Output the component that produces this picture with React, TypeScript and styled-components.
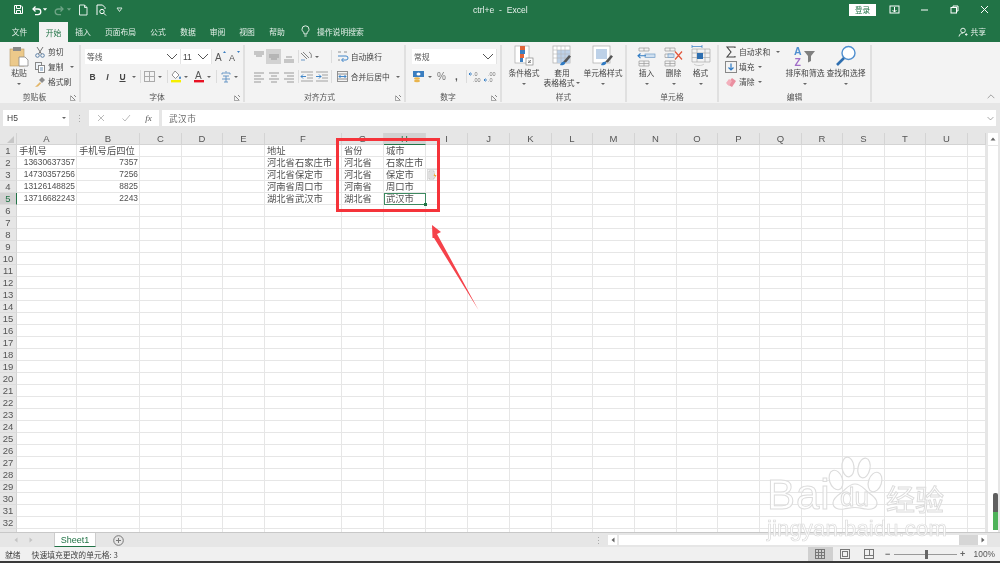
import React from 'react';
import styled, { createGlobalStyle } from 'styled-components';

const CJK = `"Noto Sans CJK SC", "Liberation Sans", sans-serif`;
const LATIN = `"Liberation Sans", sans-serif`;
const Global = createGlobalStyle`
  html, body { margin: 0; padding: 0; background: #fff; }
  * { box-sizing: border-box; }
`;

const Page = styled.div`
  position: relative; width: 1000px; height: 563px; overflow: hidden;
  font-family: ${CJK}; color: #444; background: #e6e6e6;
  filter: blur(0.35px);
`;

/* title bar */
const TitleBar = styled.div`
  display: flex; align-items: center; height: 21px; background: #217346; color: #fff;
  padding: 0 0 2px 11px;
`;
const Qat = styled.div`display: flex; align-items: center; width: 300px; flex: none;`;
const QatSlot = styled.span<{ $w: number; $ml?: number }>`
  display: flex; align-items: center; justify-content: center; width: ${p => p.$w}px; margin-left: ${p => p.$ml ?? 0}px; flex: none;
`;
const TitleText = styled.div`
  width: 410px; padding-left: 162px; font: 8.6px ${LATIN}; color: #e8f1ec; white-space: pre; flex: none;
`;
const Login = styled.div`
  margin-left: 128px; width: 27px; height: 12px; background: #fff; color: #217346; font-size: 7.6px;
  display: flex; align-items: center; justify-content: center; flex: none;
`;
const WinBtn = styled.span<{ $ml: number }>`display: flex; margin-left: ${p => p.$ml}px; flex: none;`;

/* tabs */
const TabBar = styled.div`display: flex; height: 21px; background: #217346; align-items: flex-end;`;
const Tab = styled.div<{ $w: number; $active?: boolean }>`
  width: ${p => p.$w}px; height: ${p => (p.$active ? 20 : 21)}px; flex: none; display: flex; align-items: center; justify-content: center;
  padding-bottom: ${p => (p.$active ? 0 : 1)}px;
  font-size: 7.8px; color: ${p => (p.$active ? '#217346' : '#e3efe8')}; background: ${p => (p.$active ? '#f3f3f3' : 'transparent')};
`;
const TellMe = styled.div`display: flex; align-items: center; gap: 7px; padding: 0 0 1px 9px; font-size: 7.8px; color: #e3efe8; height: 21px;`;
const Share = styled.div`
  margin-left: auto; margin-right: 14px; display: flex; align-items: center; gap: 2px; height: 21px; font-size: 7.8px; color: #e3efe8;
`;

/* ribbon */
const Ribbon = styled.div`display: flex; height: 61px; background: #f3f3f3; padding: 3px 0 1px; position: relative;`;
const Group = styled.div<{ $w: number }>`
  position: relative; width: ${p => p.$w}px; flex: none; display: flex; flex-direction: column; border-right: 2px solid #e0e0e0;
`;
const GroupBody = styled.div<{ $pl?: number; $pt?: number; $col?: boolean }>`
  flex: 1; display: flex; flex-direction: ${p => (p.$col ? 'column' : 'row')}; padding-left: ${p => p.$pl ?? 0}px; padding-top: ${p => p.$pt ?? 0}px; min-height: 0;
`;
const GroupLabel = styled.div<{ $launch?: boolean }>`
  height: 11px; line-height: 11px; font-size: 7.8px; text-align: center; color: #555; flex: none; padding-right: ${p => (p.$launch ? 10 : 0)}px;
`;
const Launcher = styled.span`
  position: absolute; right: 3px; bottom: 1px; width: 6px; height: 6px; border: 1px solid #aaa; border-top-color: transparent; border-right-color: transparent;
  background: linear-gradient(45deg, transparent 45%, #888 50%, transparent 60%);
`;
const Stack = styled.div<{ $w?: number; $ml?: number }>`
  display: flex; flex-direction: column; width: ${p => (p.$w ? `${p.$w}px` : 'auto')}; margin-left: ${p => p.$ml ?? 0}px; margin-top: -1px; flex: none;
`;
const SmallBtn = styled.div`display: flex; align-items: center; height: 15px; font-size: 7.8px; color: #444; gap: 2px; white-space: nowrap;`;
const IconBox = styled.span<{ $w?: number; $bg?: string; $ml?: number }>`
  display: flex; align-items: center; justify-content: center; width: ${p => p.$w ?? 15}px; height: 15px; flex: none;
  background: ${p => p.$bg ?? 'transparent'}; margin-left: ${p => p.$ml ?? 0}px;
`;
const Row = styled.div<{ $mt?: number }>`display: flex; align-items: center; height: 15px; margin-top: ${p => p.$mt ?? 0}px;`;
const Sep = styled.span<{ $l: number; $r: number }>`
  width: 1px; height: 13px; background: #dcdcdc; margin: 0 ${p => p.$r}px 0 ${p => p.$l}px; flex: none;
`;
const CaretMark = styled.span<{ $w?: number; $ml?: number }>`
  display: flex; align-items: center; justify-content: center; width: ${p => p.$w ?? 8}px; flex: none; margin-left: ${p => p.$ml ?? 0}px;
  &::after { content: ''; border-left: 2px solid transparent; border-right: 2px solid transparent; border-top: 2px solid #666; }
`;
const Combo = styled.div<{ $w: number }>`
  width: ${p => p.$w}px; height: 15px; background: #fff; display: flex; align-items: center; justify-content: space-between;
  padding: 0 2px 0 2px; font-size: 7.8px; color: #555; flex: none; border-right: 1px solid #e4e4e4;
`;
const BigBtn = styled.div<{ $w: number }>`
  width: ${p => p.$w}px; flex: none; display: flex; flex-direction: column; align-items: center; font-size: 7.8px; line-height: 10px; color: #444; white-space: nowrap;
`;
const BigIcon = styled.div`height: 22px; display: flex; align-items: flex-end; justify-content: center; margin-bottom: 1px; flex: none;`;
const BigCaret = styled(CaretMark)`height: 10px; margin-top: 1px;`;
const Inline = styled.span`display: flex; align-items: center; gap: 1px;`;
const Glyph = styled.span<{ $b?: boolean; $i?: boolean; $u?: boolean; $size?: number; $c?: string }>`
  font-family: ${LATIN}; font-size: ${p => p.$size ?? 8.5}px; font-weight: ${p => (p.$b ? 700 : 400)}; font-style: ${p => (p.$i ? 'italic' : 'normal')};
  text-decoration: ${p => (p.$u ? 'underline' : 'none')}; color: ${p => p.$c ?? '#444'};
`;
const Collapse = styled.span`position: absolute; right: 5px; bottom: 3px; display: flex; transform: rotate(180deg);`;

/* formula bar */
const FormulaBar = styled.div`display: flex; align-items: center; height: 30px; padding: 0 4px 0 3px; background: #e6e6e6; flex: none;`;
const NameBox = styled.div`
  width: 66px; height: 16px; background: #fff; display: flex; align-items: center; justify-content: space-between; padding: 0 2px 0 4px; font: 8.5px ${LATIN}; color: #444; flex: none;
`;
const Dots = styled.span`width: 20px; flex: none; display: flex; justify-content: center;`;
const FxBox = styled.div`
  width: 70px; height: 16px; background: #fff; display: flex; align-items: center; justify-content: space-around; flex: none; margin-right: 3px;
`;
const Fx = styled.span`font: italic 9px "Liberation Serif", serif; color: #555;`;
const FormulaInput = styled.div`
  flex: 1; height: 16px; background: #fff; display: flex; align-items: center; justify-content: space-between; padding: 0 2px 0 7px; font-size: 8.6px; letter-spacing: .5px; color: #666;
`;

/* sheet */
const SheetArea = styled.div`position: relative; height: 399px; display: flex; background: #e6e6e6;`;
const GridWrap = styled.div`width: 986px; flex: none; overflow: hidden; background: #fff;`;
const GridRow = styled.div`display: flex; height: 12px;`;
const Corner = styled.div`
  width: 17px; flex: none; background: #e6e6e6; border-right: 1px solid #d4d4d4; border-bottom: 1px solid #d4d4d4; position: relative;
  &::after { content: ''; position: absolute; right: 2px; bottom: 1px; border-style: solid; border-width: 0 0 7px 7px; border-color: transparent transparent #c6c6c6 transparent; }
`;
const ColHead = styled.div<{ $w: number; $sel?: boolean }>`
  width: ${p => p.$w}px; flex: none; background: ${p => (p.$sel ? '#d2d2d2' : '#e6e6e6')}; border-right: 1px solid #d4d4d4;
  border-bottom: 1px solid ${p => (p.$sel ? '#217346' : '#d4d4d4')}; font: 9.500px ${LATIN}; color: ${p => (p.$sel ? '#217346' : '#555')};
  display: flex; align-items: center; justify-content: center;
`;
const RowHead = styled.div<{ $sel?: boolean }>`
  width: 17px; flex: none; background: ${p => (p.$sel ? '#d2d2d2' : '#e6e6e6')}; border-right: 1px solid ${p => (p.$sel ? '#217346' : '#d4d4d4')};
  border-bottom: 1px solid #dcdcdc; font: 9.500px ${LATIN}; color: ${p => (p.$sel ? '#217346' : '#555')};
  display: flex; align-items: center; justify-content: center;
`;
const Cell = styled.div<{ $w: number; $num?: boolean; $active?: boolean }>`
  position: relative; width: ${p => p.$w}px; flex: none; border-right: 1px solid #e6e6e6; border-bottom: 1px solid #e6e6e6;
  display: flex; align-items: center; justify-content: ${p => (p.$num ? 'flex-end' : 'flex-start')}; padding: 0 ${p => (p.$num ? 1 : 2)}px 0 2px;
  font-size: ${p => (p.$num ? 8.4 : 9.3)}px; color: #505050; white-space: nowrap; line-height: 11px;
  ${p => p.$num && `font-family: ${LATIN};`}
  ${p => p.$active && `outline: 1.5px solid #3d8a60; outline-offset: -1px; z-index: 2;`}
`;
const FillHandle = styled.span`position: absolute; right: -2px; bottom: -2px; width: 3px; height: 3px; background: #217346;`;
const FlashIcon = styled.span`
  position: absolute; left: 43px; top: 0; width: 11px; height: 12px; background: #f8f8f8; border: 1px solid #dcdcdc; display: flex; align-items: center; justify-content: center; z-index: 3;
`;

/* vertical scrollbar */
const VScroll = styled.div`width: 14px; flex: none; background: #e6e6e6; display: flex; flex-direction: column; padding: 0 2px;`;
const VArrow = styled.span`width: 10px; height: 12px; background: #fff; display: flex; align-items: center; justify-content: center; flex: none;`;
const VTrack = styled.div`flex: 1; width: 10px; background: #fff; margin-top: 1px; display: flex; flex-direction: column; justify-content: flex-end; align-items: flex-end;`;
const VMark = styled.div`width: 5px; height: 37px; margin-bottom: 2px; border-radius: 2px 2px 0 0; background: linear-gradient(#5f5f5f 0 52%, #4fb35a 52% 100%);`;

/* sheet tabs */
const SheetBar = styled.div`display: flex; align-items: center; height: 15px; background: #e6e6e6; border-top: 1px solid #c8c8c8;`;
const NavArrow = styled.span<{ $ml: number }>`width: 8px; flex: none; display: flex; align-items: center; justify-content: center; margin-left: ${p => p.$ml}px;`;
const SheetTab = styled.div`
  width: 42px; height: 14px; margin-left: 19px; background: #fff; color: #217346; font: 9px ${LATIN}; display: flex; align-items: center; justify-content: center;
  border-left: 1px solid #ccc; border-right: 1px solid #ccc; border-bottom: 1.5px solid #217346; flex: none;
`;
const AddSheet = styled.span`margin-left: 17px; flex: none; display: flex;`;
const HScrollArea = styled.div`margin-left: auto; display: flex; align-items: center; height: 14px; padding-right: 13px;`;
const HDots = styled.span`display: flex; margin-right: 8px;`;
const HBox = styled.span`width: 9px; height: 10px; background: #fff; flex: none; display: flex; align-items: center; justify-content: center;`;
const HTrack = styled.div`width: 340px; height: 10px; background: #fff; flex: none; margin-left: 2px;`;
const HRest = styled.div`width: 19px; height: 10px; background: #d6d6d6; flex: none;`;

/* status */
const StatusBar = styled.div`display: flex; align-items: center; height: 14px; background: #f0f0f0; font-size: 7.8px; color: #444; padding: 0 5px;`;
const StatusMsg = styled.span`margin-left: 11px;`;
const ViewGroup = styled.div`margin-left: auto; display: flex; align-items: center; flex: none;`;
const ViewBtn = styled.span<{ $on?: boolean }>`
  width: 24.500px; height: 14px; flex: none; display: flex; align-items: center; justify-content: center; background: ${p => (p.$on ? '#d0d0d0' : 'transparent')};
`;
const ZoomCtl = styled.div`display: flex; align-items: center; font: 8.4px ${LATIN}; color: #555; flex: none;`;
const ZoomSign = styled.span`width: 12px; flex: none; text-align: center; font: bold 9px ${LATIN}; color: #666;`;
const Slider = styled.div`position: relative; width: 63px; height: 1px; background: #999;`;
const SliderThumb = styled.span`position: absolute; left: 31px; top: -4px; width: 3px; height: 9px; background: #666;`;
const ZoomValue = styled.span`margin-left: 5px;`;
const BottomEdge = styled.div`height: 2px; background: #3a3a3a;`;

/* overlays */
const Annotation = styled.svg`position: absolute; left: 0; top: 0; width: 1000px; height: 563px; pointer-events: none; z-index: 5;`;
const Watermark = styled.div`position: absolute; left: 764px; top: 455px; width: 190px; height: 90px; pointer-events: none; z-index: 6;`;
const WmBai = styled.span`position: absolute; left: 3px; top: 19px; font: 42px/42px ${LATIN}; color: rgba(255,255,255,.7); -webkit-text-stroke: 1px #dcdcdc; letter-spacing: 1px;`;
const WmDu = styled.span`position: absolute; left: 76px; top: 29px; font: 26px/26px ${LATIN}; color: rgba(255,255,255,.5); -webkit-text-stroke: .8px #d8d8d8;`;
const WmJy = styled.span`position: absolute; left: 122px; top: 27px; font: 29px/32px ${CJK}; color: rgba(255,255,255,.7); -webkit-text-stroke: 1px #dcdcdc; white-space: nowrap;`;
const WmUrl = styled.span`position: absolute; left: 3px; top: 61px; font: 22px/26px ${LATIN}; color: rgba(255,255,255,.75); -webkit-text-stroke: .7px #dadada; white-space: nowrap; letter-spacing: .15px;`;
const WmPaw = styled.svg`position: absolute; left: 58px; top: 0; width: 68px; height: 58px;`;

const Ico = ({ s = 12, h, c, children }: { s?: number; h?: number; c?: string; children: React.ReactNode }) => (
  <svg width={s} height={h ?? s} viewBox={`0 0 ${s} ${h ?? s}`} fill="none" stroke={c ?? '#666'} strokeWidth="1">{children}</svg>
);
const Chevron = ({ c = '#555', w = 12 }: { c?: string; w?: number }) => (
  <svg width={w} height="7" viewBox="0 0 12 7" fill="none" stroke={c} strokeWidth="1"><path d="M1 1l5 5 5-5" /></svg>
);
const SmallCaretDown = ({ c = '#666' }: { c?: string }) => (
  <svg width="7" height="5" viewBox="0 0 7 5" fill={c}><path d="M1 1h5L3.500 4z" /></svg>
);
const Lines = ({ kind }: { kind: string }) => {
  const rows: Record<string, string> = {
    top: 'M2 2h10M2 4h10M4 6h6', mid: 'M2 5h10M2 7h10M4 9h6', bot: 'M4 7h6M2 10h10M2 12h10',
    l: 'M2 3h10M2 6h7M2 9h10M2 12h7', c: 'M2 3h10M4 6h6M2 9h10M4 12h6', r: 'M2 3h10M5 6h7M2 9h10M5 12h7',
  };
  return <Ico s={14} c="#999"><path d={rows[kind]} /></Ico>;
};

const IconPaste = () => (
  <svg width="20" height="21" viewBox="0 0 20 21">
    <rect x="1" y="3" width="14" height="17" fill="#ecc98a" stroke="#b79a66" strokeWidth=".6" />
    <rect x="4" y="1" width="8" height="4" fill="#8a8a8a" />
    <path d="M10 11h6l3 3v6h-9z" fill="#fff" stroke="#888" strokeWidth=".8" />
  </svg>
);
const IconCut = () => (
  <Ico s={12} c="#5b7fa6"><circle cx="3.500" cy="9.500" r="1.800" /><circle cx="8.500" cy="9.500" r="1.800" /><path d="M4.500 8L9 1M7.500 8L3 1" stroke="#777" /></Ico>
);
const IconCopy = () => (
  <Ico s={12} c="#888"><rect x="1.500" y="1.500" width="6" height="7" fill="#eef3f8" /><rect x="4.500" y="4.500" width="6" height="7" fill="#fff" /><path d="M6 7h3M6 9h3" stroke="#6a8fb5" /></Ico>
);
const IconBrush = () => (
  <svg width="12" height="12" viewBox="0 0 12 12"><path d="M5 4l3-3 3 3-3 3z" fill="#8c8c8c" /><path d="M6 6L2 10l-1 1 3-.5 3-3z" fill="#e3b667" /></svg>
);
const IconGrowFont = ({ up }: { up: boolean }) => (
  <svg width="13" height="13" viewBox="0 0 13 13">
    <text x="1" y="11" fontFamily="Liberation Sans" fontSize={up ? 10 : 9} fill="#555">A</text>
    <path d={up ? 'M9 3l1.500-2L12 3z' : 'M9 1l1.500 2L12 1z'} fill="#3b7ec0" />
  </svg>
);
const IconBorders = () => <Ico s={13} c="#aaa"><rect x="1.500" y="1.500" width="10" height="10" /><path d="M6.500 1.500v10M1.500 6.500h10" /></Ico>;
const IconFill = () => (
  <svg width="12" height="13" viewBox="0 0 12 13"><path d="M5 1l4 4-3.500 3.500L2 5z" fill="#fff" stroke="#777" strokeWidth=".8" /><path d="M10 6c.8 1 1 1.600 1 2a1 1 0 0 1-2 0c0-.4.3-1 1-2z" fill="#3b7ec0" /><rect x="1" y="10" width="10" height="2.400" fill="#f5ef00" /></svg>
);
const IconFontColor = () => (
  <svg width="12" height="13" viewBox="0 0 12 13"><text x="2" y="9" fontFamily="Liberation Sans" fontSize="10" fill="#555">A</text><rect x="1" y="10" width="10" height="2.400" fill="#e81123" /></svg>
);
const IconPhonetic = () => (
  <svg width="12" height="13" viewBox="0 0 12 13" fill="none" stroke="#5b8fc2" strokeWidth=".9"><path d="M6 1v1.500M2 3h8M2 3v1.500M10 3v1.500M3 6h6M6 6v6M2 9h8M4 12h4" /></svg>
);
const IconOrient = () => (
  <svg width="14" height="13" viewBox="0 0 14 13" fill="none" stroke="#777" strokeWidth=".9"><path d="M2 3l6 6M4 2l6 6M10 2c2 1 3 3 2 6" /><path d="M2 10h4" stroke="#5b8fc2" /></svg>
);
const IconIndent = ({ dir }: { dir: 'l' | 'r' }) => (
  <svg width="14" height="13" viewBox="0 0 14 13" fill="none" stroke="#999" strokeWidth=".9">
    <path d="M1 2h12M7 5h6M7 8h6M1 11h12" />
    <path d={dir === 'l' ? 'M6 6.500H1M3 4.500l-2 2 2 2' : 'M1 6.500h5M4 4.500l2 2-2 2'} stroke="#2f7bc4" />
  </svg>
);
const IconWrap = () => (
  <svg width="13" height="13" viewBox="0 0 13 13" fill="none" stroke="#888" strokeWidth=".9"><path d="M2 2h3M8 2h3" /><path d="M2 6h8a2 2 0 0 1 0 4H6" stroke="#2f7bc4" /><path d="M2 10h2" /><path d="M7.500 8L5.500 10l2 2" stroke="#2f7bc4" /></svg>
);
const IconMerge = () => (
  <svg width="13" height="13" viewBox="0 0 13 13" fill="none" stroke="#888" strokeWidth=".9"><rect x="1.500" y="1.500" width="10" height="10" /><path d="M1.500 4h10M1.500 9h10" /><path d="M3 6.500h7M4.500 5L3 6.500 4.500 8M8.500 5L10 6.500 8.500 8" stroke="#2f7bc4" /></svg>
);
const IconCurrency = () => (
  <svg width="14" height="13" viewBox="0 0 14 13"><rect x="1" y="1" width="11" height="6" fill="#3b7ec0" /><ellipse cx="6.500" cy="4" rx="2" ry="1.500" fill="#fff" /><ellipse cx="5" cy="8.500" rx="3" ry="1.300" fill="#e9b44c" /><ellipse cx="5" cy="11" rx="3" ry="1.300" fill="#e9b44c" /></svg>
);
const IconDec = ({ inc }: { inc: boolean }) => (
  <svg width="14" height="13" viewBox="0 0 14 13">
    <text x="5" y="5.500" fontFamily="Liberation Sans" fontSize="5.500" fill="#777">{inc ? '.0' : '.00'}</text>
    <text x="5" y="11.500" fontFamily="Liberation Sans" fontSize="5.500" fill="#777">{inc ? '.00' : '.0'}</text>
    <path d={inc ? 'M1 4h3M2.500 2.500L1 4l1.500 1.500' : 'M1 10h3M2.500 8.500L1 10l1.500 1.500'} stroke="#2f7bc4" fill="none" strokeWidth=".9" />
  </svg>
);
const IconCond = () => (
  <svg width="20" height="22" viewBox="0 0 20 22">
    <rect x="1" y="1" width="14" height="17" fill="#fff" stroke="#aaa" strokeWidth=".7" />
    <rect x="6" y="1" width="5" height="4" fill="#e2653a" /><rect x="6" y="5" width="5" height="4" fill="#3b7ec0" /><rect x="6" y="9" width="4" height="4" fill="#e2653a" /><rect x="6" y="13" width="3" height="4" fill="#3b7ec0" />
    <rect x="12" y="13" width="7" height="7" fill="#fff" stroke="#888" strokeWidth=".7" /><path d="M14 18l3-3M14 16h3M14 17.500h3" stroke="#555" strokeWidth=".6" />
  </svg>
);
const IconTable = () => (
  <svg width="21" height="22" viewBox="0 0 21 22">
    <rect x="1" y="1" width="17" height="17" fill="#fff" stroke="#aaa" strokeWidth=".7" />
    <rect x="5" y="5" width="13" height="13" fill="#bdd1e8" />
    <path d="M1 5h17M1 9h17M1 13h17M5 1v17M9 1v17M13 1v17" stroke="#b5b5b5" strokeWidth=".6" />
    <path d="M11 17l6-7 2 1.500-5 6z" fill="#555" /><path d="M8 20c1-3 3-4 5-3 1 2-2 4-5 3z" fill="#2f7bc4" />
  </svg>
);
const IconCellStyle = () => (
  <svg width="22" height="22" viewBox="0 0 22 22">
    <rect x="1" y="1" width="17" height="17" fill="#fff" stroke="#aaa" strokeWidth=".7" />
    <rect x="4" y="4" width="11" height="10" fill="#bdd1e8" />
    <path d="M13 17l6-7 2 1.500-5 6z" fill="#555" /><path d="M9 20c1-3 3-4 5-3 1 2-2 4-5 3z" fill="#2f7bc4" />
  </svg>
);
const IconInsert = () => (
  <svg width="20" height="20" viewBox="0 0 20 20" fill="none" stroke="#999" strokeWidth=".7">
    <path d="M2 1h10v3H2zM7 1v3M2 14h10v5H2zM7 14v5M2 16.500h10" />
    <rect x="8" y="7" width="10" height="3.500" fill="#cfe0f0" stroke="#6f9bc6" />
    <path d="M9 8.800H1M3.500 6.500L1 8.800l2.500 2.300" stroke="#2f7bc4" strokeWidth="1.100" />
  </svg>
);
const IconDelete = () => (
  <svg width="20" height="20" viewBox="0 0 20 20" fill="none" stroke="#999" strokeWidth=".7">
    <path d="M1 1h10v3H1zM6 1v3M1 14h10v5H1zM6 14v5M1 16.500h10M1 7h8v3.500H1z" />
    <rect x="4" y="7" width="6" height="3.500" fill="#cfe0f0" stroke="#6f9bc6" />
    <path d="M11 4.500l7 8M18 4.500l-7 8" stroke="#e2553a" strokeWidth="1.200" />
  </svg>
);
const IconFormat = () => (
  <svg width="20" height="22" viewBox="0 0 20 22" fill="none" stroke="#aaa" strokeWidth=".7">
    <path d="M1 4h18v13H1zM1 8h18M1 12.500h18M6 4v13M14 4v13" />
    <rect x="6" y="8" width="6" height="6" fill="#2f6fb0" stroke="none" />
    <path d="M1 1.500h10M1 0v3M11 0v3" stroke="#2f7bc4" />
    <path d="M3 19c2 2 8 2 10 0" stroke="#bbb" />
  </svg>
);
const IconSigma = () => <svg width="12" height="12" viewBox="0 0 12 12" fill="none" stroke="#444" strokeWidth="1.100"><path d="M10 2V1H2l4 5-4 5h8v-1" /></svg>;
const IconFillDown = () => <svg width="12" height="12" viewBox="0 0 12 12" fill="none"><rect x=".5" y=".5" width="11" height="11" stroke="#888" /><path d="M6 2.500V9M3.500 6.500L6 9l2.500-2.500" stroke="#2f7bc4" strokeWidth="1.200" /></svg>;
const IconEraser = () => <svg width="12" height="12" viewBox="0 0 12 12"><path d="M7 2l4 3-4 6-5-3z" fill="#ea8fa0" /><path d="M1 7l3-4 3 2-3 5z" fill="#f3b0bc" /></svg>;
const IconSort = () => (
  <svg width="24" height="22" viewBox="0 0 24 22">
    <text x="1" y="9.500" fontFamily="Liberation Sans" fontSize="10.500" fontWeight="bold" fill="#4f8fd0">A</text>
    <text x="1.500" y="20.500" fontFamily="Liberation Sans" fontSize="10.500" fontWeight="bold" fill="#a06cc8">Z</text>
    <path d="M11 6h11l-4 5v5l-3 1.500V11z" fill="#7f7f7f" />
  </svg>
);
const IconFind = () => (
  <svg width="22" height="22" viewBox="0 0 22 22" fill="none"><circle cx="13.500" cy="8" r="6.500" stroke="#4f8fd0" strokeWidth="1.400" fill="#fff" /><path d="M9 13l-7 7" stroke="#2f6fb0" strokeWidth="2.600" /></svg>
);
const ViewNormal = () => <Ico s={12} c="#777"><rect x="1.500" y="1.500" width="9" height="9" /><path d="M1.500 4.500h9M1.500 7.500h9M4.500 1.500v9M7.500 1.500v9" /></Ico>;
const ViewPage = () => <Ico s={12} c="#777"><rect x="1.500" y="1.500" width="9" height="9" /><rect x="3.500" y="3.500" width="5" height="5" /></Ico>;
const ViewBreak = () => <Ico s={12} c="#777"><rect x="1.500" y="1.500" width="9" height="9" /><path d="M1.500 7.500h9M6.500 1.500v6" /></Ico>;

const cols: [string, number][] = [['A', 60], ['B', 63], ['C', 42], ['D', 41], ['E', 42], ['F', 77], ['G', 42], ['H', 42], ['I', 42], ['J', 42], ['K', 42], ['L', 41], ['M', 42], ['N', 42], ['O', 41], ['P', 42], ['Q', 42], ['R', 41], ['S', 42], ['T', 41], ['U', 42], ['', 18]];
const data: Record<number, Record<string, { t: string; n?: boolean }>> = {
  1: { A: { t: '手机号' }, B: { t: '手机号后四位' }, F: { t: '地址' }, G: { t: '省份' }, H: { t: '城市' } },
  2: { A: { t: '13630637357', n: true }, B: { t: '7357', n: true }, F: { t: '河北省石家庄市' }, G: { t: '河北省' }, H: { t: '石家庄市' } },
  3: { A: { t: '14730357256', n: true }, B: { t: '7256', n: true }, F: { t: '河北省保定市' }, G: { t: '河北省' }, H: { t: '保定市' } },
  4: { A: { t: '13126148825', n: true }, B: { t: '8825', n: true }, F: { t: '河南省周口市' }, G: { t: '河南省' }, H: { t: '周口市' } },
  5: { A: { t: '13716682243', n: true }, B: { t: '2243', n: true }, F: { t: '湖北省武汉市' }, G: { t: '湖北省' }, H: { t: '武汉市' } },
};
const rowNums = Array.from({ length: 33 }, (_, i) => i + 1);
const tabs: [string, number][] = [['文件', 39], ['开始', 29], ['插入', 30], ['页面布局', 45], ['公式', 30], ['数据', 30], ['审阅', 29], ['视图', 30], ['帮助', 30]];

export default function App() {
  return (
    <Page>
      <Global />
      <TitleBar>
        <Qat>
          <QatSlot $w={14}>
            <Ico s={11} c="#fff"><path d="M1.500 1.500h6.500l1.500 1.500v6.500h-8z" /><path d="M3.500 1.500v3h4v-3M3.500 9.500v-3h4v3" /></Ico>
          </QatSlot>
          <QatSlot $w={12} $ml={5}>
            <Ico s={12} c="#fff"><path d="M3 5h5a2.800 2.800 0 0 1 0 5.600H5" strokeWidth="1.300" /><path d="M5.500 2.500L3 5l2.500 2.500" strokeWidth="1.300" /></Ico>
          </QatSlot>
          <QatSlot $w={6}><SmallCaretDown c="#fff" /></QatSlot>
          <QatSlot $w={12} $ml={6}>
            <Ico s={12} c="#6fa587"><path d="M9 5H4a2.800 2.800 0 0 0 0 5.600h3" strokeWidth="1.300" /><path d="M6.500 2.500L9 5 6.500 7.500" strokeWidth="1.300" /></Ico>
          </QatSlot>
          <QatSlot $w={6}><SmallCaretDown c="#6fa587" /></QatSlot>
          <QatSlot $w={10} $ml={6}>
            <Ico s={10} h={12} c="#dfeee6"><path d="M1.500 1h5l2.500 2.500V11h-7.500z" /><path d="M6.500 1v2.500h2.500" /></Ico>
          </QatSlot>
          <QatSlot $w={11} $ml={8}>
            <Ico s={11} h={12} c="#fff"><path d="M1 11V1h5.500L9 3.500V5" /><circle cx="6" cy="7.500" r="2.200" /><path d="M7.700 9.200L10 11.500" /></Ico>
          </QatSlot>
          <QatSlot $w={8} $ml={8}>
            <Ico s={7} c="#cfe3d8"><path d="M1 2h5L3.500 5.500z" /></Ico>
          </QatSlot>
        </Qat>
        <TitleText>{'ctrl+e  -  Excel'}</TitleText>
        <Login>登录</Login>
        <WinBtn $ml={13}><Ico s={11} c="#fff"><rect x="1" y="2" width="9" height="7" /><path d="M5.500 3v5M3.500 6l2 2 2-2" /></Ico></WinBtn>
        <WinBtn $ml={20}><Ico s={8} c="#fff"><path d="M1 4h7" /></Ico></WinBtn>
        <WinBtn $ml={22}><Ico s={9} c="#fff"><rect x="1" y="2.500" width="5.500" height="5.500" /><path d="M3 2.500V1h5v5H6.500" /></Ico></WinBtn>
        <WinBtn $ml={21}><Ico s={9} c="#fff"><path d="M1 1l7 7M8 1l-7 7" /></Ico></WinBtn>
      </TitleBar>
      <TabBar>
        {tabs.map(([t, w]) => <Tab key={t} $w={w} $active={t === '开始'}>{t}</Tab>)}
        <TellMe>
          <Ico s={9} h={12} c="#e3efe8"><path d="M3 9V7.500C1.800 6.700 1 5.700 1 4.300a3.500 3.500 0 0 1 7 0c0 1.400-.8 2.400-2 3.200V9zM3.300 11h2.400" /></Ico>
          操作说明搜索
        </TellMe>
        <Share>
          <Ico s={10} c="#e3efe8"><circle cx="5" cy="3.500" r="2.300" /><path d="M1 9.500c.5-2.300 2-3.500 4-3.500" /><path d="M7 7.500h2.500M8.250 6.200v2.600" /></Ico>
          共享
        </Share>
      </TabBar>

      <Ribbon>
        <Group $w={81}>
          <GroupBody $pl={8}>
            <BigBtn $w={22}>
              <BigIcon><IconPaste /></BigIcon>
              <span>粘贴</span>
              <BigCaret />
            </BigBtn>
            <Stack $ml={4}>
              <SmallBtn><IconCut />剪切</SmallBtn>
              <SmallBtn><IconCopy />复制<CaretMark $w={6} $ml={3} /></SmallBtn>
              <SmallBtn><IconBrush />格式刷</SmallBtn>
            </Stack>
          </GroupBody>
          <GroupLabel $launch>剪贴板</GroupLabel>
          <Launcher />
        </Group>

        <Group $w={164}>
          <GroupBody $pl={4} $pt={4} $col>
            <Row>
              <Combo $w={96}>等线<Chevron /></Combo>
              <Combo $w={31}><Glyph $size={8.500}>11</Glyph><Chevron /></Combo>
              <IconBox $w={14} $ml={1}><IconGrowFont up /></IconBox>
              <IconBox $w={14}><IconGrowFont up={false} /></IconBox>
            </Row>
            <Row $mt={5}>
              <IconBox><Glyph $b>B</Glyph></IconBox>
              <IconBox><Glyph $i $b>I</Glyph></IconBox>
              <IconBox><Glyph $u $b>U</Glyph></IconBox>
              <CaretMark />
              <Sep $l={2} $r={2} />
              <IconBox $w={13}><IconBorders /></IconBox>
              <CaretMark />
              <Sep $l={3} $r={2} />
              <IconBox $w={12}><IconFill /></IconBox>
              <CaretMark />
              <IconBox $w={12} $ml={3}><IconFontColor /></IconBox>
              <CaretMark />
              <Sep $l={3} $r={3} />
              <IconBox $w={12}><IconPhonetic /></IconBox>
              <CaretMark />
            </Row>
          </GroupBody>
          <GroupLabel $launch>字体</GroupLabel>
          <Launcher />
        </Group>

        <Group $w={161}>
          <GroupBody $pl={6} $pt={4} $col>
            <Row>
              <IconBox><Lines kind="top" /></IconBox>
              <IconBox $bg="#d2d2d2"><Lines kind="mid" /></IconBox>
              <IconBox><Lines kind="bot" /></IconBox>
              <Sep $l={2} $r={0} />
              <IconBox $w={14}><IconOrient /></IconBox>
              <CaretMark />
              <Sep $l={10} $r={4} />
              <IconBox $w={13}><IconWrap /></IconBox>
              <SmallBtn>&nbsp;自动换行</SmallBtn>
            </Row>
            <Row $mt={5}>
              <IconBox><Lines kind="l" /></IconBox>
              <IconBox><Lines kind="c" /></IconBox>
              <IconBox><Lines kind="r" /></IconBox>
              <Sep $l={2} $r={0} />
              <IconBox><IconIndent dir="l" /></IconBox>
              <IconBox><IconIndent dir="r" /></IconBox>
              <Sep $l={2} $r={4} />
              <IconBox $w={13}><IconMerge /></IconBox>
              <SmallBtn>&nbsp;合并后居中<CaretMark $w={6} $ml={3} /></SmallBtn>
            </Row>
          </GroupBody>
          <GroupLabel $launch>对齐方式</GroupLabel>
          <Launcher />
        </Group>

        <Group $w={96}>
          <GroupBody $pl={6} $pt={4} $col>
            <Row><Combo $w={85}>常规<Chevron /></Combo></Row>
            <Row $mt={5}>
              <IconBox $w={14}><IconCurrency /></IconBox>
              <CaretMark />
              <IconBox><Glyph $size={10} $c="#777">%</Glyph></IconBox>
              <IconBox><Glyph $b $size={10} $c="#555">,</Glyph></IconBox>
              <Sep $l={2} $r={1} />
              <IconBox $w={14}><IconDec inc /></IconBox>
              <IconBox $w={14} $ml={1}><IconDec inc={false} /></IconBox>
            </Row>
          </GroupBody>
          <GroupLabel $launch>数字</GroupLabel>
          <Launcher />
        </Group>

        <Group $w={125}>
          <GroupBody $pl={3}>
            <BigBtn $w={38}><BigIcon><IconCond /></BigIcon><span>条件格式</span><BigCaret /></BigBtn>
            <BigBtn $w={38}>
              <BigIcon><IconTable /></BigIcon>
              <span>套用</span>
              <Inline>表格格式<CaretMark $w={5} /></Inline>
            </BigBtn>
            <BigBtn $w={44}><BigIcon><IconCellStyle /></BigIcon><span>单元格样式</span><BigCaret /></BigBtn>
          </GroupBody>
          <GroupLabel>样式</GroupLabel>
        </Group>

        <Group $w={92}>
          <GroupBody $pl={6}>
            <BigBtn $w={27}><BigIcon><IconInsert /></BigIcon><span>插入</span><BigCaret /></BigBtn>
            <BigBtn $w={27}><BigIcon><IconDelete /></BigIcon><span>删除</span><BigCaret /></BigBtn>
            <BigBtn $w={27}><BigIcon><IconFormat /></BigIcon><span>格式</span><BigCaret /></BigBtn>
          </GroupBody>
          <GroupLabel>单元格</GroupLabel>
        </Group>

        <Group $w={153}>
          <GroupBody $pl={6}>
            <Stack $w={60}>
              <SmallBtn><IconSigma />自动求和<CaretMark $w={6} $ml={3} /></SmallBtn>
              <SmallBtn><IconFillDown />填充<CaretMark $w={6} /></SmallBtn>
              <SmallBtn><IconEraser />清除<CaretMark $w={6} /></SmallBtn>
            </Stack>
            <BigBtn $w={40}><BigIcon><IconSort /></BigIcon><span>排序和筛选</span><BigCaret /></BigBtn>
            <BigBtn $w={42}><BigIcon><IconFind /></BigIcon><span>查找和选择</span><BigCaret /></BigBtn>
          </GroupBody>
          <GroupLabel>编辑</GroupLabel>
        </Group>
        <Collapse><Chevron c="#777" w={8} /></Collapse>
      </Ribbon>

      <FormulaBar>
        <NameBox>H5<CaretMark $w={7} /></NameBox>
        <Dots><Ico s={3} h={9} c="#aaa"><path d="M1.500 1v1M1.500 4v1M1.500 7v1" /></Ico></Dots>
        <FxBox>
          <Ico s={10} c="#bbb"><path d="M2 2l6 6M8 2l-6 6" /></Ico>
          <Ico s={10} c="#bbb"><path d="M1.500 5.500L4 8l5-6" /></Ico>
          <Fx>fx</Fx>
        </FxBox>
        <FormulaInput>武汉市<Chevron c="#666" w={7} /></FormulaInput>
      </FormulaBar>

      <SheetArea>
        <GridWrap>
          <GridRow>
            <Corner />
            {cols.map(([c, w], i) => <ColHead key={i} $w={w} $sel={c === 'H'}>{c}</ColHead>)}
          </GridRow>
          {rowNums.map(r => (
            <GridRow key={r}>
              <RowHead $sel={r === 5}>{r}</RowHead>
              {cols.map(([c, w], i) => {
                const d = data[r]?.[c];
                const active = r === 5 && c === 'H';
                return (
                  <Cell key={i} $w={w} $num={d?.n} $active={active}>
                    {d?.t}
                    {active && <FillHandle />}
                    {r === 3 && c === 'H' && (
                      <FlashIcon>
                        <svg width="9" height="10" viewBox="0 0 9 10"><path d="M1 1h5v8H1zM2 3h3M2 5h3M2 7h3" fill="none" stroke="#aaa" strokeWidth=".6" /><path d="M7 3L5.500 6H7L6.500 8.500 8.500 5H7z" fill="#eda93a" /></svg>
                      </FlashIcon>
                    )}
                  </Cell>
                );
              })}
            </GridRow>
          ))}
        </GridWrap>
        <VScroll>
          <VArrow><svg width="6" height="4" viewBox="0 0 6 4" fill="#666"><path d="M3 .5L5.500 3.500H.5z" /></svg></VArrow>
          <VTrack><VMark /></VTrack>
        </VScroll>
      </SheetArea>

      <SheetBar>
        <NavArrow $ml={12}><svg width="4" height="6" viewBox="0 0 4 6" fill="#c4c4c4"><path d="M3.500.5v5L.5 3z" /></svg></NavArrow>
        <NavArrow $ml={7}><svg width="4" height="6" viewBox="0 0 4 6" fill="#c4c4c4"><path d="M.5.5v5L3.500 3z" /></svg></NavArrow>
        <SheetTab>Sheet1</SheetTab>
        <AddSheet>
          <Ico s={11} c="#777"><circle cx="5.500" cy="5.500" r="4.800" /><path d="M5.500 3v5M3 5.500h5" /></Ico>
        </AddSheet>
        <HScrollArea>
          <HDots><Ico s={3} h={9} c="#aaa"><path d="M1.500 1v1M1.500 4v1M1.500 7v1" /></Ico></HDots>
          <HBox><svg width="4" height="6" viewBox="0 0 4 6" fill="#666"><path d="M3.500.5v5L.5 3z" /></svg></HBox>
          <HTrack />
          <HRest />
          <HBox><svg width="4" height="6" viewBox="0 0 4 6" fill="#666"><path d="M.5.5v5L3.500 3z" /></svg></HBox>
        </HScrollArea>
      </SheetBar>

      <StatusBar>
        就绪
        <StatusMsg>快速填充更改的单元格: 3</StatusMsg>
        <ViewGroup>
          <ViewBtn $on><ViewNormal /></ViewBtn>
          <ViewBtn><ViewPage /></ViewBtn>
          <ViewBtn><ViewBreak /></ViewBtn>
          <ZoomCtl>
            <ZoomSign>−</ZoomSign>
            <Slider><SliderThumb /></Slider>
            <ZoomSign>+</ZoomSign>
            <ZoomValue>100%</ZoomValue>
          </ZoomCtl>
        </ViewGroup>
      </StatusBar>
      <BottomEdge />

      <Annotation viewBox="0 0 1000 563">
        <rect x="337.500" y="139.500" width="101" height="71" fill="none" stroke="#f5333a" strokeWidth="3" />
        <path d="M432 225L441 232L437 234L478.500 310L434 238L432.500 238z" fill="#f5424a" />
      </Annotation>

      <Watermark>
        <WmPaw viewBox="0 0 68 58" fill="rgba(255,255,255,.55)" stroke="#dcdcdc" strokeWidth="1.200">
          <ellipse cx="14" cy="25" rx="6.500" ry="10" transform="rotate(-18 14 25)" />
          <ellipse cx="26" cy="12" rx="6" ry="10" transform="rotate(-6 26 12)" />
          <ellipse cx="42" cy="13" rx="6" ry="10" transform="rotate(12 42 13)" />
          <ellipse cx="53" cy="27" rx="6.500" ry="10" transform="rotate(18 53 27)" />
          <path d="M33 29c-6 0-9 5-14 9-6 4-8 7-8 10 0 5 5 7 11 6 4-.6 7-1.500 11-1.500s7 1 11 1.500c6 1 11-1 11-6 0-3-2-6-8-10-5-4-8-9-14-9z" />
        </WmPaw>
        <WmBai>Bai</WmBai>
        <WmDu>du</WmDu>
        <WmJy>经验</WmJy>
        <WmUrl>jingyan.baidu.com</WmUrl>
      </Watermark>
    </Page>
  );
}
